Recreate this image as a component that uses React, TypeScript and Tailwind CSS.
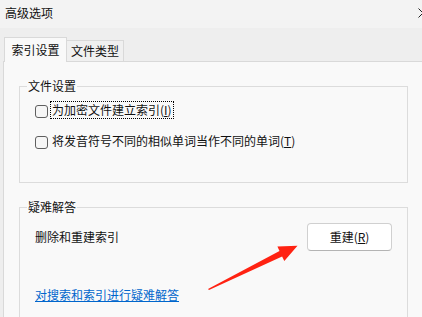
import React from "react"

const font = { fontFamily: '"Microsoft YaHei UI", "Noto Sans CJK SC", "Noto Sans", sans-serif' }

function Checkbox() {
    return <span className="mt-[2px] block h-[13px] w-[13px] shrink-0 rounded-[3px] border border-[#5f5f5f] bg-[#f6f6f6]" />
}

export default function App() {
    return (
        <div
            style={font}
            className="relative flex h-[317px] w-[422px] flex-col overflow-hidden bg-[#eeeeee] text-[12px] leading-[16px] text-[#111]"
        >
            {/* Title bar */}
            <div className="flex h-[28px] shrink-0 items-center justify-between bg-[#f3f3f3] pb-[2px] pl-[5px]">
                <span>高级选项</span>
                <svg width="10" height="10" viewBox="0 0 10 10" className="-mr-[6px] shrink-0">
                    <path d="M0.5 0.5 L9.5 9.5 M0.5 9.5 L9.5 0.5" stroke="#222" strokeWidth="1" fill="none" />
                </svg>
            </div>

            {/* Tabs */}
            <div className="flex h-[33px] shrink-0 items-end pl-[4px]">
                <div className="relative z-10 -mb-[1px] flex h-[25px] w-[63px] items-center justify-center border border-b-0 border-[#d9d9d9] bg-[#f9f9f9]">
                    索引设置
                </div>
                <div className="flex h-[21px] w-[57px] items-center justify-center border-t border-r border-[#d9d9d9] bg-[#f0f0f0]">
                    文件类型
                </div>
            </div>

            {/* Panel */}
            <div className="ml-[3px] flex-1 border-t border-l border-[#d9d9d9] bg-[#f9f9f9] pl-[15px]">
                {/* 文件设置 */}
                <div className="relative mt-[24px] h-[97px] w-[389px] border border-[#dcdcdc]">
                    <span className="absolute -top-[9px] left-[7px] bg-[#f9f9f9] px-[1px]">文件设置</span>
                    <div className="mt-[14px] flex h-[18px] items-center pl-[15px]">
                        <Checkbox />
                        <span className="ml-[2px] h-[18px] border border-dotted border-black px-[1px]">
                            为加密文件建立索引(<span className="underline">I</span>)
                        </span>
                    </div>
                    <div className="mt-[13px] flex h-[18px] items-center pl-[15px]">
                        <Checkbox />
                        <span className="ml-[2px] px-[2px]">
                            将发音符号不同的相似单词当作不同的单词(<span className="underline">T</span>)
                        </span>
                    </div>
                </div>

                {/* 疑难解答 */}
                <div className="relative mt-[24px] h-[130px] w-[389px] border border-[#dcdcdc]">
                    <span className="absolute -top-[9px] left-[7px] bg-[#f9f9f9] px-[1px]">疑难解答</span>
                    <div className="mt-[15px] flex items-center justify-between px-[15px]">
                        <span>删除和重建索引</span>
                        <button className="flex h-[28px] w-[85px] items-center justify-center rounded-[4px] border border-[#d0d0d0] border-b-[#b4b4b4] bg-white">
                            重建(<span className="underline">R</span>)
                        </button>
                    </div>
                    <div className="mt-[36px] pl-[15px]">
                        <span className="text-[#0066cc] underline">对搜索和索引进行疑难解答</span>
                    </div>
                </div>
            </div>

            {/* Red annotation arrow */}
            <svg className="pointer-events-none absolute inset-0" width="422" height="317" viewBox="0 0 422 317">
                <polygon
                    points="208,289 279.5,251.1 277.4,246.6 297.5,245.8 284.3,261 282.1,256.5 209,290"
                    fill="#ff2212"
                />
            </svg>
        </div>
    )
}
